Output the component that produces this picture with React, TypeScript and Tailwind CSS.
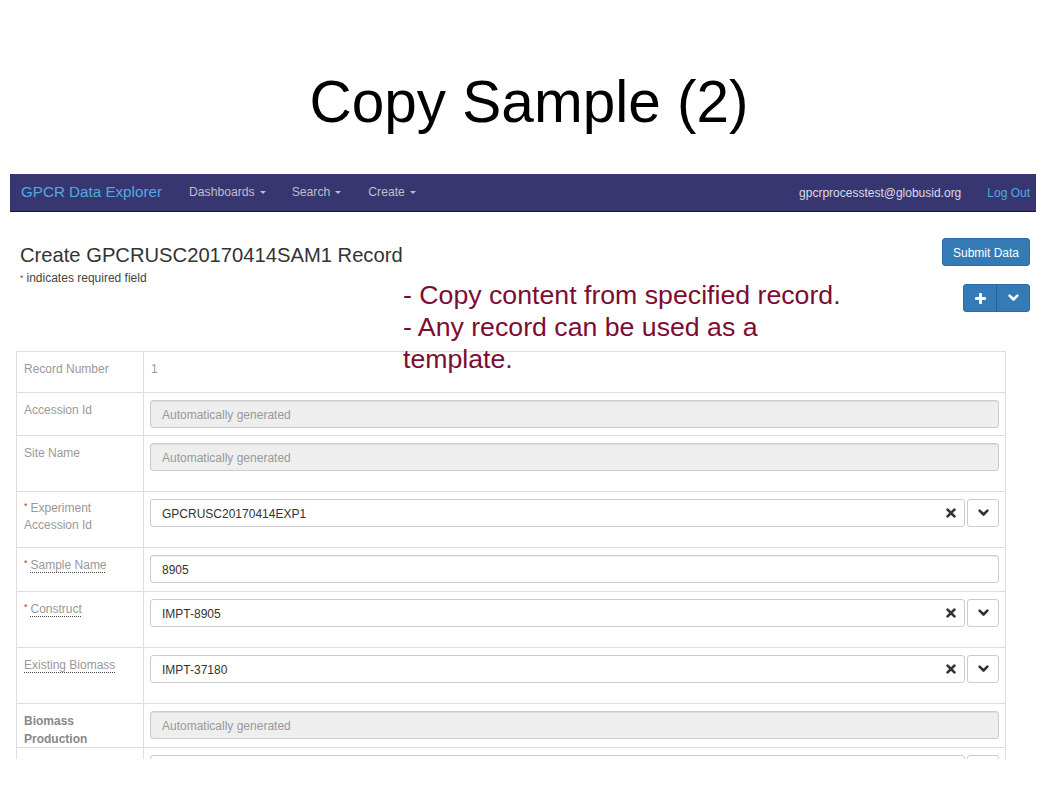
import React from "react";

const Caret = () => (
  <span className="inline-block ml-[5px] w-0 h-0 border-x-[3.5px] border-x-transparent border-t-[3.5px] border-t-current align-middle" />
);

const Star = () => (
  <span className="inline-block text-[#c9302c] text-[9px] align-top leading-[12px] mr-[3px]">*</span>
);

const XIcon = () => (
  <svg width="10" height="10" viewBox="0 0 10 10">
    <path d="M1.6 1.6 L8.4 8.4 M8.4 1.6 L1.6 8.4" stroke="#333" strokeWidth="2.7" strokeLinecap="round" />
  </svg>
);

const Chevron = ({ color = "#333" }: { color?: string }) => (
  <svg width="11" height="8" viewBox="0 0 11 8">
    <path d="M1.6 1.6 L5.5 5.5 L9.4 1.6" stroke={color} strokeWidth="2.6" fill="none" strokeLinecap="round" strokeLinejoin="round" />
  </svg>
);

const Plus = () => (
  <svg width="11" height="11" viewBox="0 0 11 11">
    <path d="M5.5 1.2 V9.8 M1.2 5.5 H9.8" stroke="#fff" strokeWidth="3" strokeLinecap="round" />
  </svg>
);

const Disabled = () => (
  <div className="h-[28px] rounded-[3px] border border-[#ccc] bg-[#eee] pl-[11px] pt-[2px] flex items-center text-[12px] text-[#999] shadow-[inset_0_1px_1px_rgba(0,0,0,0.075)]">
    Automatically generated
  </div>
);

const TextInput = ({ value }: { value: string }) => (
  <div className="h-[28px] rounded-[3px] border border-[#ccc] bg-white pl-[11px] pt-[2px] flex items-center text-[12px] text-[#333] shadow-[inset_0_1px_1px_rgba(0,0,0,0.075)]">
    {value}
  </div>
);

const Select = ({ value }: { value: string }) => (
  <div className="flex gap-[2px] h-[28px]">
    <div className="flex-1 rounded-[3px] border border-[#ccc] bg-white pl-[11px] pr-[8px] flex items-center justify-between text-[12px] text-[#333]">
      <span className="pt-[2px]">{value}</span>
      {value ? <XIcon /> : null}
    </div>
    <div className="w-[32px] rounded-[3px] border border-[#ccc] bg-white flex items-center justify-center">
      <Chevron />
    </div>
  </div>
);

const Row = ({ h, label, children }: { h: string; label: React.ReactNode; children?: React.ReactNode }) => (
  <div className={`grid grid-cols-[127px_1fr] border-b border-[#ddd] ${h}`}>
    <div className="border-r border-[#ddd] pl-[7px] pr-[6px] pt-[9px] text-[12px] leading-[17px] text-[#999]">{label}</div>
    <div className="px-[6px] pt-[7px]">{children}</div>
  </div>
);

const Abbr = ({ children }: { children: React.ReactNode }) => (
  <span className="underline decoration-dotted decoration-[#444] underline-offset-[3px]">{children}</span>
);

export default function App() {
  return (
    <div className="relative w-[1058px] h-[794px] bg-white overflow-hidden font-['Liberation_Sans',Arial,sans-serif]">
      <div className="h-[174px] pt-[69px] text-center text-[58.5px] leading-[66px] text-black">Copy Sample (2)</div>

      <div className="ml-[10px] w-[1026px] h-[585px] overflow-hidden">
        <nav className="h-[38px] bg-[#383670] border-b border-[#191834] flex items-center justify-between">
          <div className="flex items-center">
            <span className="pl-[11px] text-[15.2px] text-[#4eaae2]">GPCR Data Explorer</span>
            <span className="ml-[27px] text-[12.2px] text-[#bdbdcf] flex items-center">Dashboards<Caret /></span>
            <span className="ml-[26px] text-[12.2px] text-[#bdbdcf] flex items-center">Search<Caret /></span>
            <span className="ml-[27px] text-[12.2px] text-[#bdbdcf] flex items-center">Create<Caret /></span>
          </div>
          <div className="flex items-center pr-[6px]">
            <span className="text-[12px] text-[#dcdce6]">gpcrprocesstest@globusid.org</span>
            <span className="ml-[26px] text-[12px] text-[#4eaae2]">Log Out</span>
          </div>
        </nav>

        <div className="px-[6px]">
          <div className="h-[139px] flex justify-between items-start">
            <div className="pt-[31px] pl-[4px]">
              <div className="text-[20.2px] leading-[24px] text-[#333]">Create GPCRUSC20170414SAM1 Record</div>
              <div className="mt-[3px] text-[12px] leading-[16px] text-[#444]">
                <span className="text-[#c9302c] text-[9px] align-top mr-[3px]">*</span>indicates required field
              </div>
            </div>
            <div className="pt-[26px] flex flex-col items-end">
              <div className="h-[28px] w-[88px] pt-[2px] rounded-[3px] bg-[#337ab7] border border-[#2e6da4] text-white text-[12px] flex items-center justify-center">
                Submit Data
              </div>
              <div className="mt-[18px] h-[28px] w-[67px] rounded-[3px] bg-[#337ab7] border border-[#2e6da4] flex">
                <div className="w-[33px] flex items-center justify-center border-r border-[#285f8f]">
                  <Plus />
                </div>
                <div className="flex-1 flex items-center justify-center">
                  <Chevron color="#fff" />
                </div>
              </div>
            </div>
          </div>

          <div className="w-[990px] border-x border-t border-[#ddd]">
            <Row h="h-[41px]" label="Record Number">
              <div className="pl-[1px] pt-[2px] text-[12px] leading-[17px] text-[#999]">1</div>
            </Row>
            <Row h="h-[43px]" label="Accession Id">
              <Disabled />
            </Row>
            <Row h="h-[56px]" label="Site Name">
              <Disabled />
            </Row>
            <Row h="h-[56px]" label={<div className="-mt-[1px]"><Star />Experiment Accession Id</div>}>
              <Select value="GPCRUSC20170414EXP1" />
            </Row>
            <Row h="h-[44px]" label={<><Star /><Abbr>Sample Name</Abbr></>}>
              <TextInput value="8905" />
            </Row>
            <Row h="h-[56px]" label={<><Star /><Abbr>Construct</Abbr></>}>
              <Select value="IMPT-8905" />
            </Row>
            <Row h="h-[56px]" label={<Abbr>Existing Biomass</Abbr>}>
              <Select value="IMPT-37180" />
            </Row>
            <Row
              h="h-[44px]"
              label={<div className="font-bold text-[#888] leading-[18px] -mt-[1px]">Biomass Production</div>}
            >
              <Disabled />
            </Row>
            <Row h="h-[60px]" label="">
              <Select value="" />
            </Row>
          </div>
        </div>
      </div>

      <div className="absolute left-[403px] top-[279px] text-[26.7px] leading-[32px] text-[#7d0c32]">
        <div>- Copy content from specified record.</div>
        <div>- Any record can be used as a</div>
        <div>template.</div>
      </div>
    </div>
  );
}
